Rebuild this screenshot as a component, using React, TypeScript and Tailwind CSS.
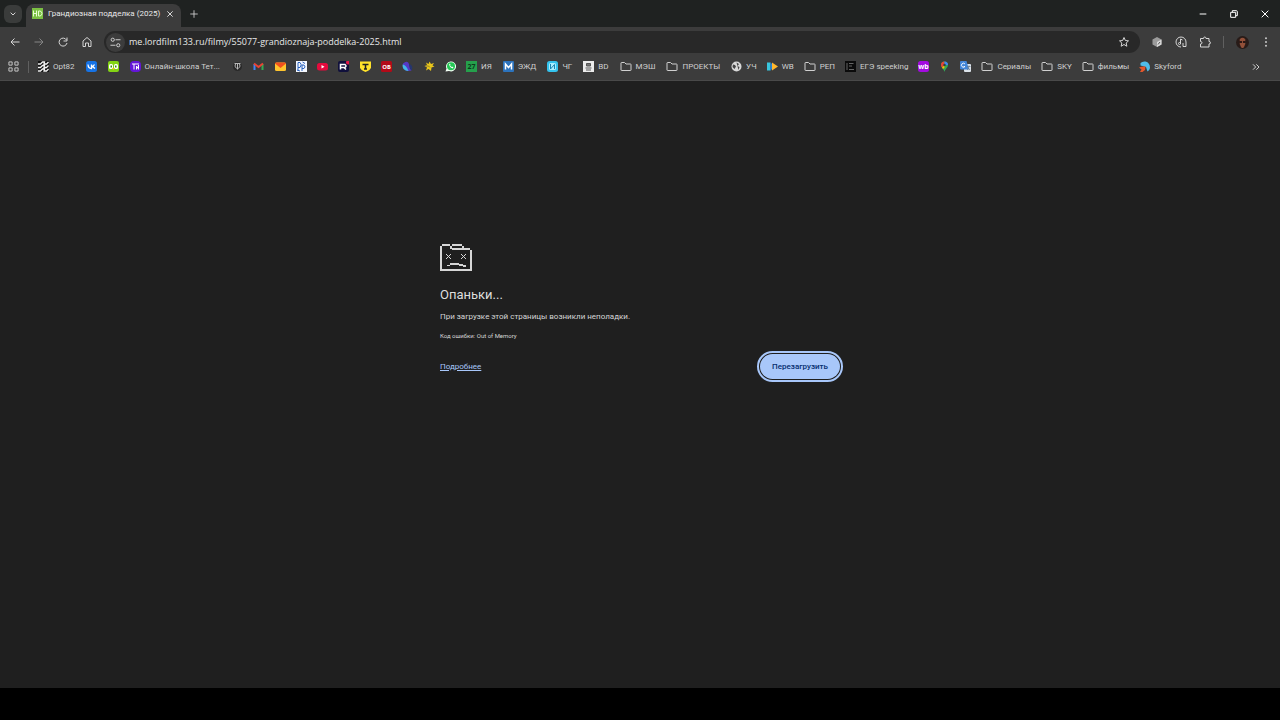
import React from "react";

type SvgProps = { children: React.ReactNode; box?: string; className?: string };

function Glyph({ children, box = "0 0 24 24", className = "size-3" }: SvgProps) {
  return (
    <svg viewBox={box} className={`${className} shrink-0`} fill="none" stroke="currentColor" strokeWidth="2" aria-hidden="true">
      {children}
    </svg>
  );
}

/* Favicons are drawn on a 22 unit square, two units to the pixel. */
function Fav({ children }: { children: React.ReactNode }) {
  return (
    <svg viewBox="0 0 22 22" className="size-[11px] shrink-0 font-['Open_Sans',sans-serif] font-bold" aria-hidden="true">
      {children}
    </svg>
  );
}

const label = (text: string, size: number, fill: string, y: number) => (
  <text x="11" y={y} fontSize={size} fill={fill} textAnchor="middle">{text}</text>
);

const Opt = () => (
  <Fav>
    <rect width="22" height="22" fill="#111" />
    <path d="M0 6h5l4-4h4l-1 4h5l4-4M0 13h5l4-4h4l-1 4h5l4-4M0 20h5l4-4h4l-1 4h5l4-4" fill="none" stroke="#f2f2f2" strokeWidth="2.6" />
  </Fav>
);
const Vk = () => (
  <Fav>
    <rect width="22" height="22" rx="5" fill="#1673e6" />
    <path d="M4 7c.3 5 3 8 7 8V7M11 11c3 0 5-2 6-4M11 11c3 0 5 2 7 4" fill="none" stroke="#fff" strokeWidth="2.6" />
  </Fav>
);
const Duo = () => (
  <Fav>
    <rect width="22" height="22" rx="4" fill="#83d414" />
    <rect x="2" y="6" width="8" height="10" rx="3" fill="#fff" />
    <rect x="12" y="6" width="8" height="10" rx="3" fill="#fff" />
    <path d="M5 9h3v4H5zM14 9h3v4h-3z" fill="#3a8a13" />
    <path d="m8 14 3 4 3-4z" fill="#f4c91b" />
  </Fav>
);
const Tetrika = () => (
  <Fav>
    <rect width="22" height="22" rx="8" fill="#6416d8" />
    <path d="M4 6h14M8 6v11M13 10v7M17 8v9M13 16l4-6" fill="none" stroke="#fff" strokeWidth="2" />
  </Fav>
);
const Wiki = () => (
  <Fav>
    <circle cx="11" cy="11" r="9" fill="#292929" />
    <path d="M5 5h12M7 6q-3 4 2 9M11 5v12M15 6q3 4-2 9" fill="none" stroke="#b7b7b7" strokeWidth="2" />
  </Fav>
);
const Gmail = () => (
  <Fav>
    <path d="M3 18V6" stroke="#4285f4" strokeWidth="4" />
    <path d="M19 18V6" stroke="#34a853" strokeWidth="4" />
    <path d="m2 5 9 7 9-7" fill="none" stroke="#ea4335" strokeWidth="4" />
  </Fav>
);
const Mail = () => (
  <Fav>
    <rect y="3" width="22" height="17" rx="3" fill="#ffc52e" />
    <path d="M0 5q0-2 3-2h16q3 0 3 2l-11 9z" fill="#f0501e" />
  </Fav>
);
const Dp = () => (
  <Fav>
    <rect width="22" height="22" fill="#f5f8ff" />
    <path d="M4 3h4q5 4 0 10H4zM4 13v6M12 8v12M12 8h4q4 4 0 7h-4M13 2l5 3M2 18l6 2" fill="none" stroke="#2a62bd" strokeWidth="2" />
  </Fav>
);
const Tube = () => (
  <Fav>
    <rect y="4" width="22" height="15" rx="5" fill="#e50b3d" />
    <path d="m9 8 6 3.500-6 3.500z" fill="#fff" />
  </Fav>
);
const Rutube = () => (
  <Fav>
    <rect width="22" height="22" rx="4" fill="#10103c" />
    <circle cx="20" cy="3" r="4" fill="#e51646" />
    <path d="M5 17V7h9q4 3 0 6H5M12 13l4 4" fill="none" stroke="#fff" strokeWidth="3" />
  </Fav>
);
const Tbank = () => (
  <Fav>
    <path d="M0 1h22v12q-1 5-11 9Q1 18 0 13z" fill="#ffe22b" />
    <path d="M5 7h12M11 7v9M8 16h6" stroke="#222" strokeWidth="3" />
  </Fav>
);
const Ob = () => (
  <Fav>
    <rect width="22" height="22" rx="3" fill="#b30a18" />
    {label("ОБ", 12, "#fff", 15)}
  </Fav>
);
const Swirl = () => (
  <Fav>
    <path d="M2 5q9-7 12 1l5 13Q6 22 2 13z" fill="#5538c5" />
    <path d="M1 7q7 0 12 13Q0 20 1 7" fill="#43b5e8" />
    <path d="M14 5q10 5 5 14-5-3-5-14" fill="#26366e" />
  </Fav>
);
const Sun = () => (
  <Fav>
    <path d="m4 3 5 3 2-5 3 5 6-2-3 5 4 2-6 2-1 7-5-4-5 3 2-6-5-3 5-2z" fill="#e9c61b" />
    <path d="M3 10h6l3 3" fill="none" stroke="#3c3c3c" />
  </Fav>
);
const Whats = () => (
  <Fav>
    <path d="m1 21 2-6A10 10 0 1 1 8 20z" fill="#f3fff5" />
    <circle cx="12" cy="10.500" r="8" fill="#25c856" />
    <path d="M8 7q1 6 7 8l2-2-3-2-1 1-3-3 1-1-1-3z" fill="#fff" />
  </Fav>
);
const TwentySeven = () => (
  <Fav>
    <rect width="22" height="22" fill="#25a04c" />
    {label("27", 14, "#0c3c1c", 16)}
  </Fav>
);
const Mesh = () => (
  <Fav>
    <rect width="22" height="22" rx="2" fill="#2c73bd" />
    <path d="M5 17V6l6 7 6-7v11" fill="none" stroke="#fff" strokeWidth="3" />
  </Fav>
);
const Cyan = () => (
  <Fav>
    <rect width="22" height="22" rx="5" fill="#34c3ee" />
    <rect x="4" y="4" width="14" height="14" rx="3" fill="#a9efff" />
    <path d="M7 6v10l8-9v9" fill="none" stroke="#1685b4" strokeWidth="2" />
  </Fav>
);
const Bd = () => (
  <Fav>
    <rect width="22" height="22" fill="#ececec" />
    <path d="M7 5h8v5H7zM5 14h12M6 18h10" fill="#777" stroke="#555" strokeWidth="2" />
  </Fav>
);
const World = () => (
  <Fav>
    <circle cx="11" cy="11" r="10" fill="#d8d8d8" />
    <path d="M4 7q5 0 6 4l-3 5-4-4zM11 3l5 3-3 4 4 2-2 6M13 10h5" fill="#444" />
  </Fav>
);
const Wordwall = () => (
  <Fav>
    <path d="M0 3h7v16H0z" fill="#38c5dd" />
    <path d="m7 3 8 8-8 8z" fill="#2482dd" />
    <path d="m10 3 12 8-12 8z" fill="#ffb72d" />
  </Fav>
);
const Ege = () => (
  <Fav>
    <rect width="22" height="22" fill="#0b0b0b" />
    <path d="M4 4v14M8 5h9M8 10h6M8 17h10" stroke="#666" strokeWidth="2" />
  </Fav>
);
const Wb = () => (
  <Fav>
    <rect width="22" height="22" rx="5" fill="#a30be0" />
    {label("wb", 14, "#fff", 16)}
  </Fav>
);
const Pin = () => (
  <Fav>
    <path d="M11 22C10 16 4 13 4 8a7 7 0 0 1 14 0c0 5-6 8-7 14" fill="#34a853" />
    <path d="M4 8a7 7 0 0 1 7-7v7l-5 5q-2-2-2-5" fill="#ea4335" />
    <path d="M11 1a7 7 0 0 1 7 7h-7z" fill="#4285f4" />
    <path d="m6 13 5-5v5l-3 3z" fill="#fbbc04" />
    <circle cx="11" cy="8" r="2.500" fill="#3c3c3c" />
  </Fav>
);
const Translate = () => (
  <Fav>
    <rect x="8" y="6" width="14" height="16" rx="2" fill="#dce3ea" />
    <path d="M0 2q0-2 2-2h11l5 17H2q-2 0-2-2z" fill="#4285d8" />
    <path d="M10 6a4 4 0 1 0 0 5H7" fill="none" stroke="#fff" strokeWidth="1.800" />
    <path d="M14 11h7M18 9v2q-1 5-4 7M16 13l4 5" fill="none" stroke="#64788c" strokeWidth="1.500" />
  </Fav>
);
const Sky = () => (
  <Fav>
    <path d="M3 4q4-4 10-3 9 2 9 13-1 5-5 7l-3-9-11-3z" fill="#50bce9" />
    <path d="M0 13q6-3 13-2l-1 7-5 4H2l3-5z" fill="#e4572c" />
  </Fav>
);
const Folder = () => (
  <svg viewBox="0 0 24 22" className="h-[11px] w-3 shrink-0" fill="none" stroke="currentColor" strokeWidth="2" aria-hidden="true">
    <path d="M2 4q0-1 1-1h6l3 3h9q1 0 1 1v11q0 1-1 1H3q-1 0-1-1z" />
  </svg>
);

type Item = { icon: React.ReactNode; name: string; text?: string };

function Bookmark({ icon, name, text }: Item) {
  return (
    <a href="#" aria-label={name} className="flex shrink-0 items-center gap-1 whitespace-nowrap">
      {icon}
      {text && <span>{text}</span>}
    </a>
  );
}

const quick: Item[] = [
  { icon: <Wiki />, name: "Википедия" },
  { icon: <Gmail />, name: "Gmail" },
  { icon: <Mail />, name: "Почта" },
  { icon: <Dp />, name: "Dp" },
  { icon: <Tube />, name: "YouTube" },
  { icon: <Rutube />, name: "Rutube" },
  { icon: <Tbank />, name: "Т-Банк" },
  { icon: <Ob />, name: "ОБ" },
  { icon: <Swirl />, name: "Браузер" },
  { icon: <Sun />, name: "Солнце" },
  { icon: <Whats />, name: "WhatsApp" },
];

const school: Item[] = [
  { icon: <TwentySeven />, name: "ИЯ", text: "ИЯ" },
  { icon: <Mesh />, name: "ЭЖД", text: "ЭЖД" },
  { icon: <Cyan />, name: "ЧГ", text: "ЧГ" },
  { icon: <Bd />, name: "BD", text: "BD" },
  { icon: <Folder />, name: "МЭШ", text: "МЭШ" },
  { icon: <Folder />, name: "ПРОЕКТЫ", text: "ПРОЕКТЫ" },
  { icon: <World />, name: "УЧ", text: "УЧ" },
];

const misc: Item[] = [
  { icon: <Wordwall />, name: "WB", text: "WB" },
  { icon: <Folder />, name: "РЕП", text: "РЕП" },
  { icon: <Ege />, name: "ЕГЭ speeking", text: "ЕГЭ speeking" },
  { icon: <Wb />, name: "Wildberries" },
  { icon: <Pin />, name: "Карты" },
  { icon: <Translate />, name: "Переводчик" },
  { icon: <Folder />, name: "Сериалы", text: "Сериалы" },
  { icon: <Folder />, name: "SKY", text: "SKY" },
  { icon: <Folder />, name: "фильмы", text: "фильмы" },
  { icon: <Sky />, name: "Skyford", text: "Skyford" },
];

function TabStrip() {
  return (
    <header className="flex h-[27px] items-center bg-[#1f2221]">
      <button aria-label="Поиск вкладок" className="ml-1 flex size-[18px] items-center justify-center rounded-md bg-[#3a3c3b]">
        <Glyph className="size-2"><path d="m5 8 7 7 7-7" strokeWidth="3" /></Glyph>
      </button>
      <div className="ml-1 flex h-full items-end pt-1">
        <div className="flex h-full w-[155px] items-center rounded-t-lg bg-[#3c3c3c] pr-1 pb-1 pl-[6px]">
          <svg viewBox="0 0 22 22" className="size-[11px] shrink-0" aria-hidden="true">
            <rect width="22" height="22" fill="#7bc043" />
            <path d="M3 5v12M9 5v12M3 11h6M13 6h3q4 1 4 5t-4 5h-3z" fill="none" stroke="#e6ffd0" strokeWidth="2" />
          </svg>
          <span className="ml-[5px] flex-1 truncate text-[8px] text-[#e8e8e8]">Грандиозная подделка (2025)</span>
          <button aria-label="Закрыть вкладку" className="flex size-[14px] items-center justify-center">
            <Glyph className="size-2"><path d="m4 4 16 16M20 4 4 20" strokeWidth="3" /></Glyph>
          </button>
        </div>
      </div>
      <button aria-label="Новая вкладка" className="ml-[5px] flex size-4 items-center justify-center">
        <Glyph className="size-[10px]"><path d="M12 3v18M3 12h18" /></Glyph>
      </button>
      <div className="ml-auto flex items-center gap-[19px] pr-[9px] text-white">
        <button aria-label="Свернуть" className="flex size-3 items-center justify-center">
          <Glyph className="size-2"><path d="M2 12h20" strokeWidth="3" /></Glyph>
        </button>
        <button aria-label="Развернуть" className="flex size-3 items-center justify-center">
          <Glyph className="size-2"><path d="M2 7h15v15H2zM7 7V2h12q3 0 3 3v12h-5" strokeWidth="3" /></Glyph>
        </button>
        <button aria-label="Закрыть" className="flex size-3 items-center justify-center">
          <Glyph className="size-2"><path d="m2 2 20 20M22 2 2 22" strokeWidth="3" /></Glyph>
        </button>
      </div>
    </header>
  );
}

function Toolbar() {
  return (
    <div className="flex h-[30px] items-center bg-[#3c3c3c] pr-[9px] pl-[9px]">
      <nav className="flex items-center gap-3">
        <button aria-label="Назад"><Glyph><path d="M21 12H4M11 5l-7 7 7 7" /></Glyph></button>
        <button aria-label="Вперёд" className="text-[#858585]"><Glyph><path d="M3 12h17M13 5l7 7-7 7" /></Glyph></button>
        <button aria-label="Обновить"><Glyph><path d="M19 8a8 8 0 1 0 1 6M20 3v7h-7" /></Glyph></button>
        <button aria-label="Главная"><Glyph><path d="M4 10l8-7 8 7v11h-5v-7H9v7H4z" /></Glyph></button>
      </nav>
      <div className="ml-[11px] flex h-[22px] flex-1 items-center rounded-full bg-[#282828] pr-[10px] pl-[2px]">
        <button aria-label="Сведения о сайте" className="flex size-[19px] items-center justify-center rounded-full bg-[#3c3c3c]">
          <Glyph className="size-[11px]">
            <circle cx="6" cy="6" r="3.500" /><path d="M12 6h11M1 18h11" /><circle cx="18" cy="18" r="3.500" />
          </Glyph>
        </button>
        <input
          aria-label="Адресная строка"
          defaultValue="me.lordfilm133.ru/filmy/55077-grandioznaja-poddelka-2025.html"
          className="ml-1 min-w-0 flex-1 bg-transparent font-['Open_Sans',sans-serif] text-[9px] text-[#e8e8e8] outline-none"
        />
        <button aria-label="Добавить в закладки">
          <Glyph><path d="m12 3 2.700 6 6.300.7-4.700 4.300 1.400 6.500L12 17l-5.700 3.500L7.700 14 3 9.700 9.300 9z" /></Glyph>
        </button>
      </div>
      <div className="ml-[11px] flex items-center gap-3">
        <button aria-label="Расширение">
          <Glyph>
            <path d="m12 2 9 5v10l-9 5-9-5V7z" fill="#9b9b9b" stroke="none" />
            <path d="m12 12 9-5v10l-9 5z" fill="#d8d8d8" stroke="none" />
            <path d="m14 17 4-5" stroke="#555" />
          </Glyph>
        </button>
        <button aria-label="Управление медиа">
          <Glyph>
            <path d="M12 22A10 10 0 1 1 22 12v9h-6v-7M11 16V6l4 2" /><circle cx="9" cy="15" r="2" />
          </Glyph>
        </button>
        <button aria-label="Расширения">
          <Glyph>
            <path d="M3 5h6q0-3 2.500-3T14 5h6v6q3 0 3 2.500T20 16v6H3v-6q3 0 3-2.500T3 11z" />
          </Glyph>
        </button>
        <span className="h-3 w-px bg-[#606060]" />
        <button aria-label="Профиль">
          <svg viewBox="0 0 28 28" className="size-[13px]" aria-hidden="true">
            <circle cx="14" cy="14" r="14" fill="#281b18" />
            <path d="M8 7q6-6 12 0v10q-3 9-6 9t-6-9z" fill="#925039" />
            <path d="M7 11h6v4H7zM15 11h6v4h-6z" fill="#2b1815" />
          </svg>
        </button>
        <button aria-label="Меню">
          <Glyph className="h-3 w-[10px]">
            <g fill="currentColor" stroke="none"><circle cx="12" cy="3" r="2.200" /><circle cx="12" cy="12" r="2.200" /><circle cx="12" cy="21" r="2.200" /></g>
          </Glyph>
        </button>
      </div>
    </div>
  );
}

function BookmarksBar() {
  return (
    <nav className="flex h-6 items-center border-b border-[#494949] bg-[#3c3c3c] px-2 pb-1 text-[8px] text-[#d0d0d0]">
      <button aria-label="Приложения">
        <Glyph className="size-[11px]">
          <path d="M2 2h7v7H2zM15 2h7v7h-7zM2 15h7v7H2zM15 15h7v7h-7z" />
        </Glyph>
      </button>
      <span className="mr-[9px] ml-[9px] h-3 w-px bg-[#606060]" />
      <div className="flex items-center gap-[11px]">
        <Bookmark icon={<Opt />} name="Opt82" text="Opt82" />
        <Bookmark icon={<Vk />} name="ВКонтакте" />
        <Bookmark icon={<Duo />} name="Duolingo" />
        <Bookmark icon={<Tetrika />} name="Онлайн-школа Тетрика" text="Онлайн-школа Тет..." />
      </div>
      <div className="ml-3 flex w-[224px] items-center justify-between">
        {quick.map((item) => <Bookmark key={item.name} {...item} />)}
      </div>
      <div className="ml-[10px] flex items-center gap-[11px]">
        {school.map((item) => <Bookmark key={item.name} {...item} />)}
      </div>
      <div className="ml-[10px] flex items-center gap-[10px]">
        {misc.map((item) => <Bookmark key={item.name} {...item} />)}
      </div>
      <button aria-label="Другие закладки" className="ml-auto pr-3">
        <Glyph className="size-2"><path d="m3 4 8 8-8 8M13 4l8 8-8 8" strokeWidth="3" /></Glyph>
      </button>
    </nav>
  );
}

function SadFolder() {
  return (
    <svg viewBox="0 0 32 27" className="h-[27px] w-8" fill="#d6d6d6" shapeRendering="crispEdges" aria-hidden="true">
      <path d="M2 0h8v2H2zM0 2h2v23H0zM12 0h10v2H12zM10 2h2v3h-2zM12 4h18v2H12zM22 2h2v2h-2zM30 6h2v19h-2zM0 25h32v2H0z" />
      <path d="M6 10h1v1H6zM10 10h1v1h-1zM7 11h1v1H7zM9 11h1v1H9zM8 12h1v1H8zM7 13h1v1H7zM9 13h1v1H9zM6 14h1v1H6zM10 14h1v1h-1z" />
      <path d="M21 10h1v1h-1zM25 10h1v1h-1zM22 11h1v1h-1zM24 11h1v1h-1zM23 12h1v1h-1zM22 13h1v1h-1zM24 13h1v1h-1zM21 14h1v1h-1zM25 14h1v1h-1z" />
      <path d="M10 19h9v2h-9zM7 21h3v1H7zM19 20h4v2h-4zM23 21h3v2h-3z" />
    </svg>
  );
}

export default function App() {
  return (
    <div className="flex min-h-screen flex-col bg-[#1f1f1f] font-[Roboto,'Noto_Sans',sans-serif] text-[#d6d6d6]">
      <TabStrip />
      <Toolbar />
      <BookmarksBar />
      <main className="flex-1 px-6 pt-[163px]">
        <section className="mx-auto w-full max-w-[400px]">
          <SadFolder />
          <h1 className="mt-[15px] text-[13px] leading-[18px] text-[#dedede]">Опаньки...</h1>
          <p className="mt-[7px] text-[8px] leading-3">При загрузке этой страницы возникли неполадки.</p>
          <p className="mt-[7px] text-[6px] leading-3">Код ошибки: Out of Memory</p>
          <div className="mt-3 flex items-center justify-between">
            <a href="#" className="text-[8px] text-[#a8c7fa] underline">Подробнее</a>
            <button className="h-[25px] rounded-full bg-[#a8c7fa] px-3 text-[8px] font-medium text-[#062e6f] outline-2 outline-offset-1 outline-[#a8c7fa]">
              Перезагрузить
            </button>
          </div>
        </section>
      </main>
      <footer className="h-8 bg-black" />
    </div>
  );
}
